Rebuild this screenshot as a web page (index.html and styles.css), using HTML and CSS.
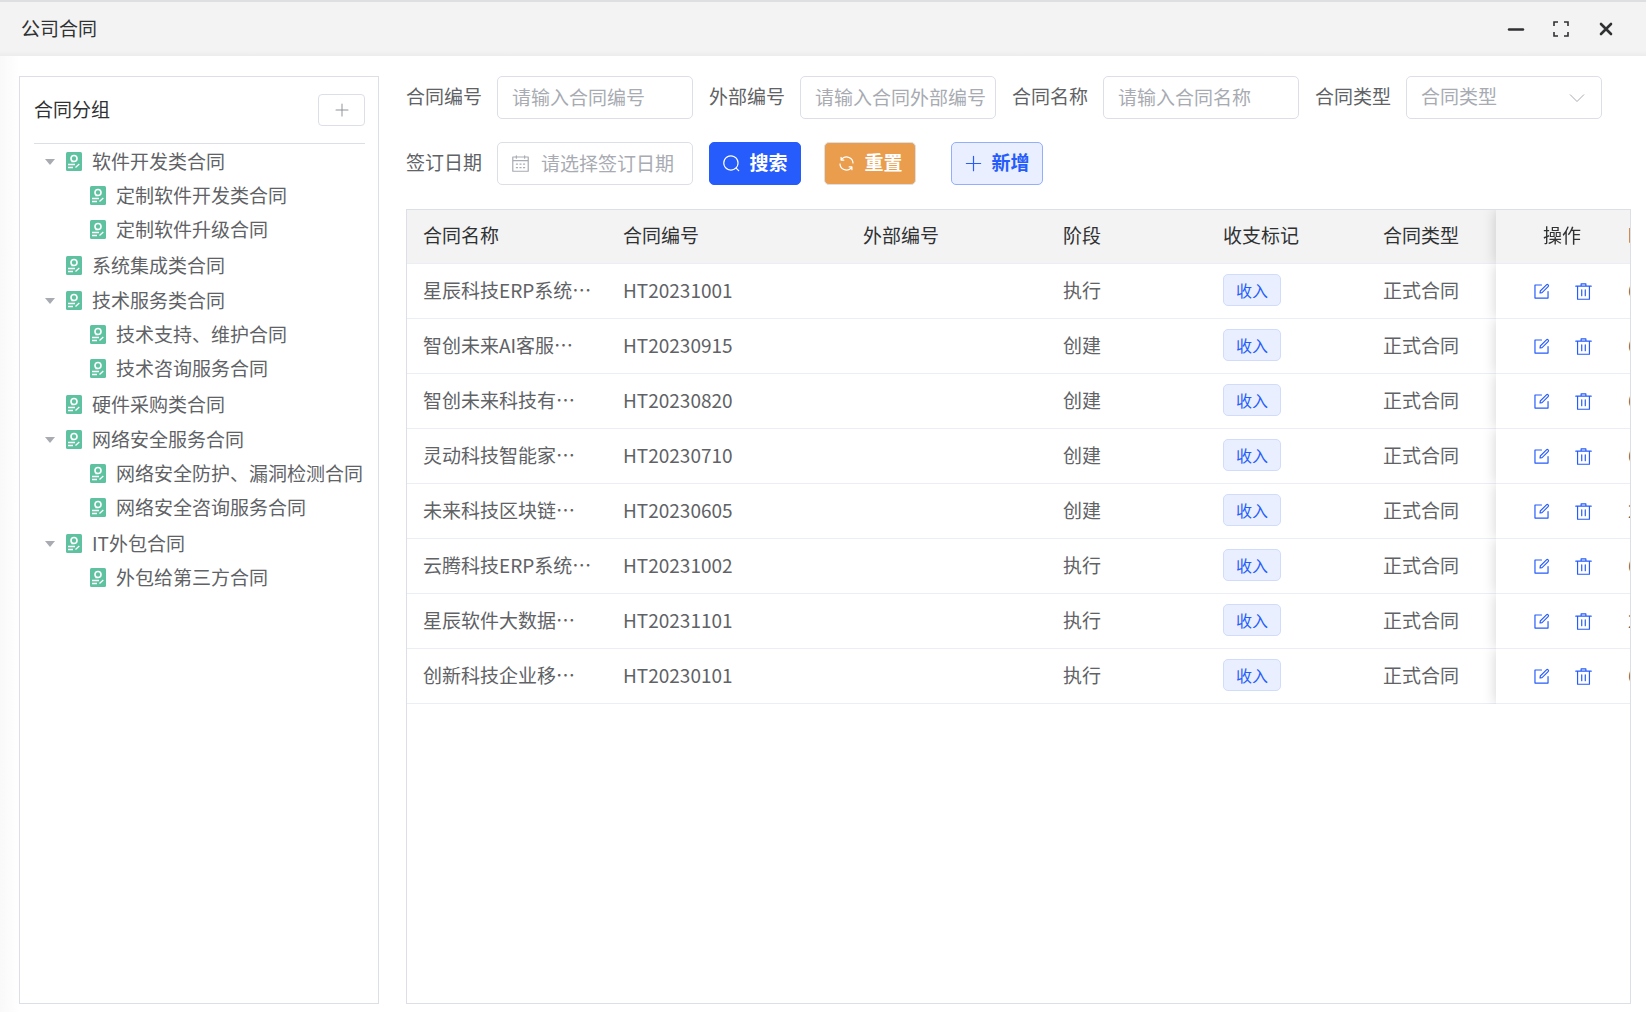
FILE: index.html
```
<!DOCTYPE html>
<html lang="zh-CN">
<head>
    <meta charset="UTF-8">
    <meta name="viewport" content="width=device-width, initial-scale=1.0">
    <title>公司合同</title>
    <link rel="stylesheet" href="styles.css">
</head>
<body>
    <!-- shared icons -->
    <svg class="sprite" aria-hidden="true">
        <symbol id="icon-doc" viewBox="0 0 16 19">
            <rect width="16" height="19" rx="1.5" fill="#5ec2a0"/>
            <circle cx="8" cy="6.5" r="3" fill="none" stroke="#fff" stroke-width="1.6"/>
            <path d="M5.5 9.5h2M2 12.5h7M2 15.5h5M9.5 15.5l3.8-3.5" fill="none" stroke="#fff" stroke-width="1.3"/>
        </symbol>
        <symbol id="icon-edit" viewBox="0 0 1024 1024">
            <path fill="currentColor" d="M832 512a32 32 0 1 1 64 0v352a32 32 0 0 1-32 32H160a32 32 0 0 1-32-32V160a32 32 0 0 1 32-32h352a32 32 0 0 1 0 64H192v640h640V512z"/>
            <path fill="currentColor" d="m469.952 554.24 52.8-7.552L847.104 222.4a32 32 0 1 0-45.248-45.248L477.44 501.44l-7.552 52.8zm422.4-422.4a96 96 0 0 1 0 135.808l-331.84 331.84a32 32 0 0 1-18.112 9.088L436.8 623.68a32 32 0 0 1-36.224-36.224l15.104-105.6a32 32 0 0 1 9.024-18.112l331.904-331.84a96 96 0 0 1 135.744 0z"/>
        </symbol>
        <symbol id="icon-delete" viewBox="0 0 1024 1024">
            <path fill="currentColor" d="M160 256H96a32 32 0 0 1 0-64h256V95.936a32 32 0 0 1 32-32h256a32 32 0 0 1 32 32V192h256a32 32 0 1 1 0 64h-64v672a32 32 0 0 1-32 32H192a32 32 0 0 1-32-32V256zm448-64v-64H416v64h192zM224 896h576V256H224v640zm192-128a32 32 0 0 1-32-32V416a32 32 0 0 1 64 0v320a32 32 0 0 1-32 32zm192 0a32 32 0 0 1-32-32V416a32 32 0 0 1 64 0v320a32 32 0 0 1-32 32z"/>
        </symbol>
        <symbol id="icon-plus" viewBox="0 0 1024 1024">
            <path fill="currentColor" d="M480 480V128a32 32 0 0 1 64 0v352h352a32 32 0 1 1 0 64H544v352a32 32 0 1 1-64 0V544H128a32 32 0 0 1 0-64h352z"/>
        </symbol>
        <symbol id="icon-search" viewBox="0 0 1024 1024">
            <path fill="currentColor" d="m795.904 750.72 124.992 124.928a32 32 0 0 1-45.248 45.248L750.656 795.904a416 416 0 1 1 45.248-45.248zM480 832a352 352 0 1 0 0-704 352 352 0 0 0 0 704z"/>
        </symbol>
        <symbol id="icon-refresh" viewBox="0 0 1024 1024">
            <path fill="currentColor" d="M771.776 794.88A384 384 0 0 1 128 512h64a320 320 0 0 0 555.712 216.448H654.72a32 32 0 1 1 0-64h149.056a32 32 0 0 1 32 32v148.928a32 32 0 1 1-64 0v-50.56zM276.288 295.616h92.992a32 32 0 0 1 0 64H220.16a32 32 0 0 1-32-32V178.56a32 32 0 0 1 64 0v50.56A384 384 0 0 1 896.128 512h-64a320 320 0 0 0-555.776-216.384z"/>
        </symbol>
        <symbol id="icon-calendar" viewBox="0 0 1024 1024">
            <path fill="currentColor" d="M128 384v512h768V192H768v32a32 32 0 1 1-64 0v-32H320v32a32 32 0 0 1-64 0v-32H128v128h768v64H128zm192-256h384V96a32 32 0 1 1 64 0v32h160a32 32 0 0 1 32 32v768a32 32 0 0 1-32 32H96a32 32 0 0 1-32-32V160a32 32 0 0 1 32-32h160V96a32 32 0 0 1 64 0v32zm-32 384h64a32 32 0 0 1 0 64h-64a32 32 0 0 1 0-64zm0 192h64a32 32 0 1 1 0 64h-64a32 32 0 1 1 0-64zm192-192h64a32 32 0 0 1 0 64h-64a32 32 0 0 1 0-64zm0 192h64a32 32 0 1 1 0 64h-64a32 32 0 1 1 0-64zm192-192h64a32 32 0 1 1 0 64h-64a32 32 0 1 1 0-64zm0 192h64a32 32 0 1 1 0 64h-64a32 32 0 1 1 0-64z"/>
        </symbol>
    </svg>

    <div class="window">
        <header class="titlebar">
            <h1>公司合同</h1>
            <div class="window-controls">
                <button type="button" aria-label="最小化">
                    <svg viewBox="0 0 18 18"><path d="M2 9.5h14" stroke-width="2.4" stroke-linecap="round"/></svg>
                </button>
                <button type="button" aria-label="最大化">
                    <svg viewBox="0 0 18 18"><path d="M2 6V2h4M12 2h4v4M16 12v4h-4M6 16H2v-4" stroke-width="1.6"/></svg>
                </button>
                <button type="button" aria-label="关闭">
                    <svg viewBox="0 0 18 18"><path d="M4 4l10 10M14 4L4 14" stroke-width="2.6" stroke-linecap="round"/></svg>
                </button>
            </div>
        </header>

        <div class="content">
            <aside class="sidebar">
                <div class="sidebar-header">
                    <h2>合同分组</h2>
                    <button type="button" class="add-group" aria-label="新增分组">
                        <svg class="icon"><use href="#icon-plus"/></svg>
                    </button>
                </div>
                <ul class="tree" id="tree"></ul>
            </aside>

            <main class="main">
                <form class="filters" id="filterForm">
                    <div class="field">
                        <label for="code">合同编号</label>
                        <input type="text" id="code" placeholder="请输入合同编号">
                    </div>
                    <div class="field">
                        <label for="outerCode">外部编号</label>
                        <input type="text" id="outerCode" placeholder="请输入合同外部编号">
                    </div>
                    <div class="field">
                        <label for="name">合同名称</label>
                        <input type="text" id="name" placeholder="请输入合同名称">
                    </div>
                    <div class="field">
                        <label for="type">合同类型</label>
                        <div class="select-box">
                            <select id="type">
                                <option value="">合同类型</option>
                            </select>
                            <svg viewBox="0 0 16 16"><path d="M1 4.5l7 7 7-7"/></svg>
                        </div>
                    </div>
                    <div class="field">
                        <label for="signDate">签订日期</label>
                        <div class="date-box">
                            <svg class="icon"><use href="#icon-calendar"/></svg>
                            <input type="text" id="signDate" placeholder="请选择签订日期">
                        </div>
                    </div>
                    <div class="buttons">
                        <button type="submit" class="btn btn-primary"><svg class="icon"><use href="#icon-search"/></svg><span>搜索</span></button>
                        <button type="reset" class="btn btn-warning"><svg class="icon"><use href="#icon-refresh"/></svg><span>重置</span></button>
                        <button type="button" class="btn btn-plain"><svg class="icon"><use href="#icon-plus"/></svg><span>新增</span></button>
                    </div>
                </form>

                <div class="table-wrap">
                    <table class="table">
                        <colgroup>
                            <col class="w-name"><col class="w-code"><col class="w-outer">
                            <col class="w-small"><col class="w-small"><col class="w-type">
                            <col class="w-amount"><col class="w-action">
                        </colgroup>
                        <thead>
                            <tr>
                                <th>合同名称</th>
                                <th>合同编号</th>
                                <th>外部编号</th>
                                <th>阶段</th>
                                <th>收支标记</th>
                                <th>合同类型</th>
                                <th>时间</th>
                                <th class="action">操作</th>
                            </tr>
                        </thead>
                        <tbody id="rows"></tbody>
                    </table>
                </div>
            </main>
        </div>
    </div>

    <script src="script.js"></script>
</body>
</html>
```
FILE: styles.css
```
* {
    box-sizing: border-box;
}

body {
    margin: 0;
    font-family: "Noto Sans CJK SC", sans-serif;
    font-size: 19px;
    line-height: 28px;
    color: #606266;
    background: #fff;
}

h1,
h2 {
    margin: 0;
    padding-bottom: 3px;
    font-size: 19px;
    font-weight: 400;
    color: #303133;
}

button,
input,
select {
    font: inherit;
}

button {
    cursor: pointer;
}

.sprite {
    display: none;
}

.icon {
    width: 19px;
    height: 19px;
    flex: none;
}

.window {
    display: flex;
    flex-direction: column;
    height: 100vh;
    background: linear-gradient(to right, #f9f9f9, #fff 20px);
}

.titlebar {
    display: flex;
    align-items: center;
    justify-content: space-between;
    height: 56px;
    padding: 0 31px 0 21px;
    border-top: 2px solid #dedfe0;
    background: linear-gradient(to top, #ececec, #f3f3f3 5px);
}

.window-controls {
    display: flex;
    gap: 27px;
}

.window-controls button {
    display: flex;
    padding: 0;
    border: none;
    background: none;
}

.window-controls svg {
    width: 18px;
    height: 18px;
    fill: none;
    stroke: #303133;
}

.content {
    flex: 1;
    display: flex;
    gap: 27px;
    min-height: 0;
    padding: 20px 15px 8px 19px;
}

/* group tree */
.sidebar {
    flex: none;
    width: 360px;
    padding: 0 13px 0 14px;
    border: 1px solid #dcdfe6;
}

.sidebar-header {
    display: flex;
    align-items: center;
    justify-content: space-between;
    height: 67px;
    border-bottom: 1px solid #dcdfe6;
}

.add-group {
    display: flex;
    align-items: center;
    justify-content: center;
    width: 47px;
    height: 32px;
    border: 1px solid #dcdfe6;
    border-radius: 4px;
    background: #fff;
    color: #909399;
}

.add-group .icon {
    width: 16px;
    height: 16px;
}

.tree,
.tree ul {
    margin: 0;
    padding: 0;
    list-style: none;
}

.tree > li {
    margin-bottom: 1px;
}

.tree ul {
    padding: 0 0 1px 24px;
}

.node {
    display: flex;
    align-items: center;
    height: 34px;
    white-space: nowrap;
}

.caret {
    width: 32px;
    display: flex;
    justify-content: center;
    padding-top: 2px;
}

.caret.open::before {
    content: "";
    border: 5px solid transparent;
    border-top: 6px solid #a8abb2;
    border-bottom: none;
}

.node svg {
    width: 16px;
    height: 19px;
    margin-right: 10px;
}

/* filters */
.main {
    flex: 1;
    display: flex;
    flex-direction: column;
    gap: 24px;
    min-width: 0;
}

.filters {
    display: flex;
    flex-wrap: wrap;
    gap: 23px 16px;
}

.field {
    display: flex;
    align-items: center;
    gap: 16px;
}

.field label {
    width: 75px;
    padding-bottom: 3px;
    white-space: nowrap;
}

.field input,
.field select {
    width: 196px;
    height: 43px;
    padding: 0 8px 3px 14px;
    border: 1px solid #dcdfe6;
    border-radius: 5px;
    background: #fff;
    color: #606266;
    outline: none;
}

.field input::placeholder {
    color: #a8abb2;
    opacity: 1;
}

.field input:focus,
.field select:focus {
    border-color: #265cfb;
}

.field select {
    appearance: none;
    color: #a8abb2;
}

.select-box,
.date-box {
    position: relative;
    display: flex;
}

.select-box svg {
    position: absolute;
    right: 17px;
    top: 14px;
    width: 16px;
    height: 16px;
    fill: none;
    stroke: #a8abb2;
    pointer-events: none;
}

.date-box .icon {
    position: absolute;
    left: 14px;
    top: 12px;
    color: #a8abb2;
}

.field .date-box input {
    padding-left: 43px;
}

.buttons {
    display: flex;
    gap: 23px;
}

.btn {
    display: flex;
    align-items: center;
    justify-content: center;
    gap: 8px;
    width: 92px;
    height: 43px;
    padding: 0;
    border: 1px solid #dcdfe6;
    border-radius: 5px;
    font-weight: 700;
    white-space: nowrap;
}

.btn span {
    padding-bottom: 3px;
}

.btn-primary {
    border-color: #265cfb;
    background: #265cfb;
    color: #fff;
}

.btn-warning {
    background: #e99d4d;
    color: #fff;
}

.btn-plain {
    margin-left: 12px;
    border-color: #93aefd;
    background: #e9effe;
    color: #265cfb;
}

/* contract table */
.table-wrap {
    flex: 1;
    overflow: hidden;
    border: 1px solid #dcdfe6;
}

.table {
    width: 1537px;
    table-layout: fixed;
    border-collapse: separate;
    border-spacing: 0;
}

.w-name,
.w-outer,
.w-amount {
    width: 200px;
}

.w-code {
    width: 240px;
}

.w-small {
    width: 160px;
}

.w-type {
    width: 245px;
}

.w-action {
    width: 132px;
}

.table th,
.table td {
    height: 55px;
    padding: 0 16px 2px;
    border-bottom: 1px solid #ebeef5;
    background: #fff;
    font-weight: 400;
    text-align: left;
    white-space: nowrap;
}

.table th {
    height: 54px;
    padding-bottom: 4px;
    background: #f3f3f3;
    color: #303133;
}

.table .action {
    position: sticky;
    right: 2px;
    padding: 0;
    text-align: center;
    box-shadow: 0 0 13px rgba(0, 0, 0, 0.18);
    clip-path: inset(0 0 0 -13px);
}

.table th.action {
    padding-bottom: 3px;
}

.tag {
    display: inline-block;
    padding: 0 12px;
    border: 1px solid #d1dcfd;
    border-radius: 5px;
    background: #e9effe;
    color: #265cfb;
    font-size: 16px;
    line-height: 30px;
    vertical-align: middle;
}

.actions {
    display: flex;
    justify-content: center;
    gap: 23px;
}

.actions button {
    display: flex;
    padding: 0;
    border: none;
    background: none;
    color: #265cfb;
}
```
FILE: script.js
```
const groups = [
    { name: '软件开发类合同', children: ['定制软件开发类合同', '定制软件升级合同'] },
    { name: '系统集成类合同', children: [] },
    { name: '技术服务类合同', children: ['技术支持、维护合同', '技术咨询服务合同'] },
    { name: '硬件采购类合同', children: [] },
    { name: '网络安全服务合同', children: ['网络安全防护、漏洞检测合同', '网络安全咨询服务合同'] },
    { name: 'IT外包合同', children: ['外包给第三方合同'] }
];

const contracts = [
    ['星辰科技ERP系统…', 'HT20231001', '执行', '600000'],
    ['智创未来AI客服…', 'HT20230915', '创建', '600000'],
    ['智创未来科技有…', 'HT20230820', '创建', '600000'],
    ['灵动科技智能家…', 'HT20230710', '创建', '600000'],
    ['未来科技区块链…', 'HT20230605', '创建', '200000'],
    ['云腾科技ERP系统…', 'HT20231002', '执行', '600000'],
    ['星辰软件大数据…', 'HT20231101', '执行', '200000'],
    ['创新科技企业移…', 'HT20230101', '执行', '600000']
];

function node(name, open) {
    return `<div class="node"><span class="caret ${open ? 'open' : ''}"></span><svg><use href="#icon-doc"/></svg>${name}</div>`;
}

document.getElementById('tree').innerHTML = groups.map(g => `
    <li>${node(g.name, g.children.length > 0)}
        ${g.children.length ? `<ul>${g.children.map(c => `<li>${node(c)}</li>`).join('')}</ul>` : ''}
    </li>`).join('');

document.getElementById('rows').innerHTML = contracts.map(([name, code, stage, amount]) => `
    <tr>
        <td>${name}</td>
        <td>${code}</td>
        <td></td>
        <td>${stage}</td>
        <td><span class="tag">收入</span></td>
        <td>正式合同</td>
        <td>${amount}</td>
        <td class="action">
            <div class="actions">
                <button type="button" aria-label="编辑"><svg class="icon"><use href="#icon-edit"/></svg></button>
                <button type="button" aria-label="删除"><svg class="icon"><use href="#icon-delete"/></svg></button>
            </div>
        </td>
    </tr>`).join('');

document.getElementById('filterForm').addEventListener('submit', e => e.preventDefault());
```
